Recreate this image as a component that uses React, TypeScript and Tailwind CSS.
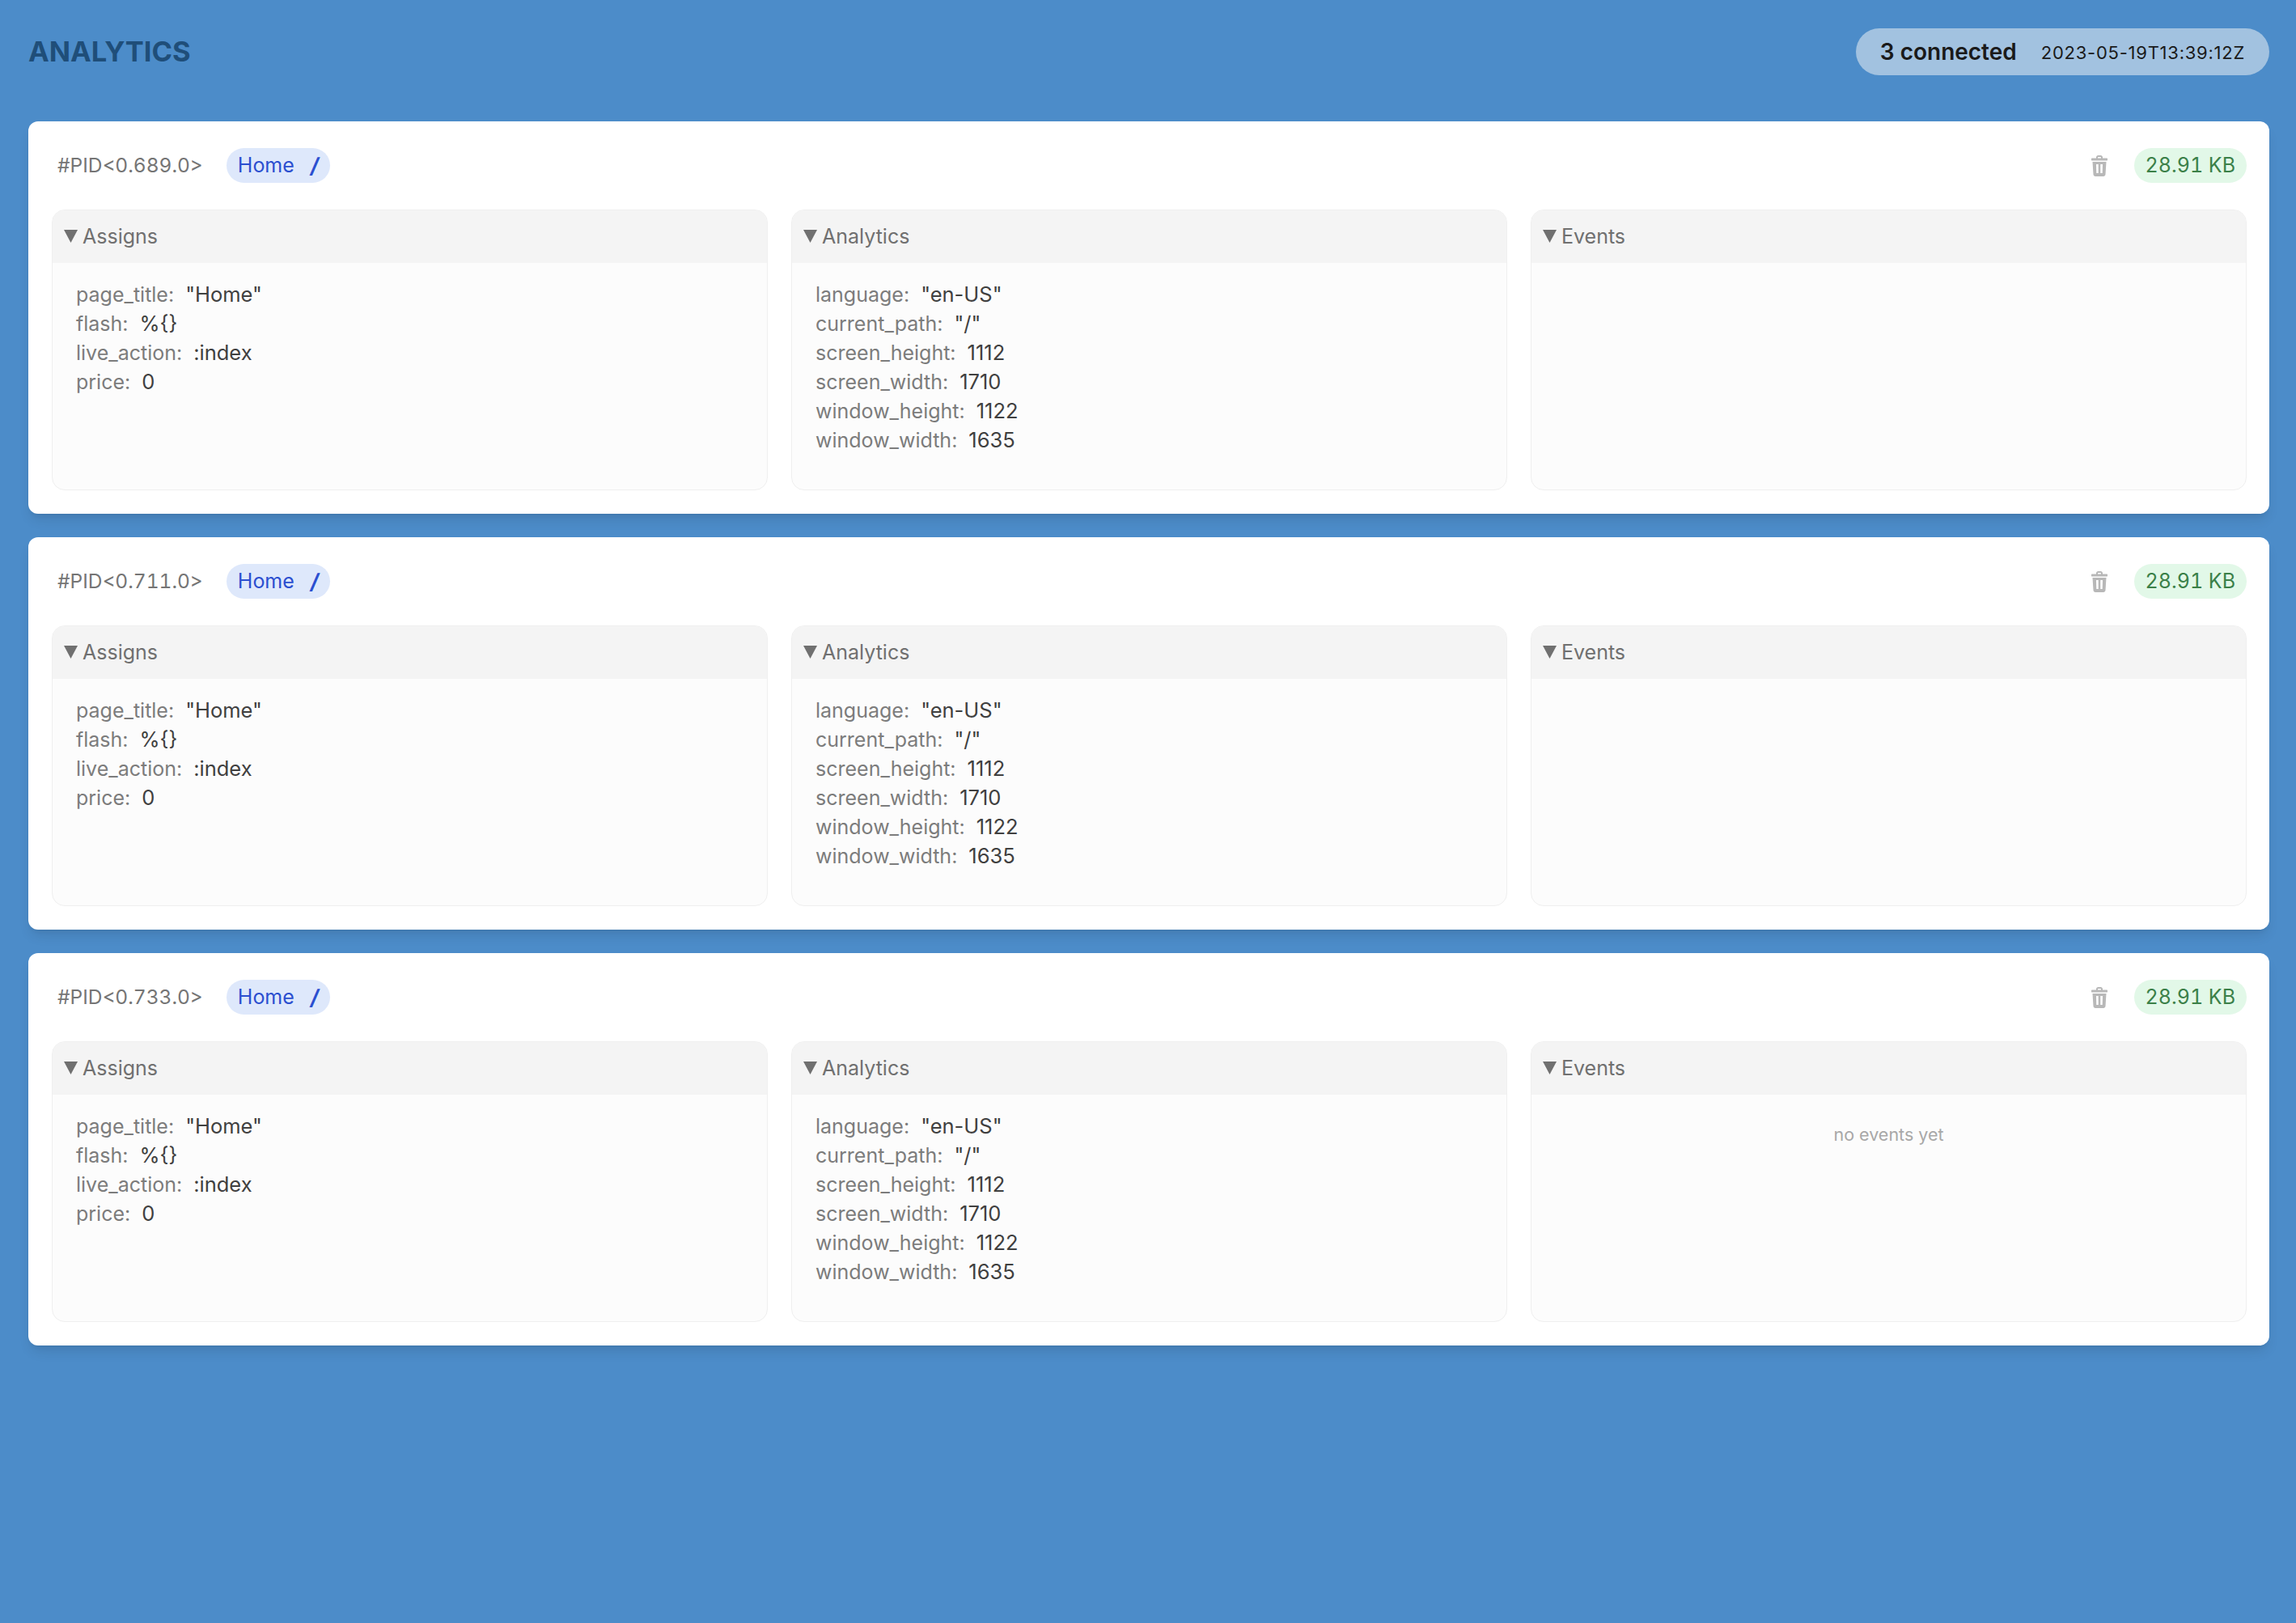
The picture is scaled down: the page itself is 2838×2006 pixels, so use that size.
const assigns = [
  ['page_title', '"Home"'],
  ['flash', '%{}'],
  ['live_action', ':index'],
  ['price', '0'],
]

const analytics = [
  ['language', '"en-US"'],
  ['current_path', '"/"'],
  ['screen_height', '1112'],
  ['screen_width', '1710'],
  ['window_height', '1122'],
  ['window_width', '1635'],
]

const sessions = [
  { pid: '#PID<0.689.0>', empty: false },
  { pid: '#PID<0.711.0>', empty: false },
  { pid: '#PID<0.733.0>', empty: true },
]

function TrashIcon() {
  return (
    <svg viewBox="0 0 20 26" className="w-[20px] h-[26px] text-[#b8b8b8]" fill="currentColor">
      <path d="M6 3.500V2.500C6 1.100 7.100 0 8.500 0h3C12.900 0 14 1.100 14 2.500v1h5c.6 0 1 .4 1 1v1.500c0 .3-.2.5-.5.5H.5C.2 6.500 0 6.300 0 6V4.500c0-.6.4-1 1-1h5zM8 3.500h4v-1c0-.3-.2-.5-.5-.5h-3c-.3 0-.5.2-.5.500v1z" />
      <path
        fillRule="evenodd"
        d="M1.500 8h17L17.500 23.500C17.400 25 16.300 26 15 26H5c-1.300 0-2.400-1-2.500-2.500L1.500 8zM6 11l.3 11h2.400V11H6zM11.300 11v11h2.400L14 11h-2.700z"
      />
    </svg>
  )
}

function Panel({ title, children }: { title: string; children?: React.ReactNode }) {
  return (
    <div className="rounded-[16px] border border-[#efefef] bg-[#fcfcfc] overflow-hidden">
      <div className="h-[65px] bg-[#f4f4f4] flex items-center pl-[14px] gap-[6px] text-[25px] text-[#707070]">
        <svg viewBox="0 0 17 16" className="w-[17px] h-[16px] mt-[-1px]" fill="currentColor">
          <polygon points="0,0 17,0 8.500,16" />
        </svg>
        {title}
      </div>
      {children}
    </div>
  )
}

function Rows({ rows }: { rows: string[][] }) {
  return (
    <div className="pt-[21px] pb-[43px] pl-[29px] text-[25px] leading-[36px]">
      {rows.map(([key, value]) => (
        <div key={key} className="flex gap-[14px]">
          <span className="text-[#7c7c7c]">{key}:</span>
          <span className="text-[#404040] text-[25.500px]">{value}</span>
        </div>
      ))}
    </div>
  )
}

function Session({ pid, empty }: { pid: string; empty: boolean }) {
  return (
    <div className="bg-white rounded-[12px] shadow-lg pl-[29px] pr-[28px] pt-[33px] pb-[29px]">
      <div className="flex items-center h-[43px] mb-[33px]">
        <span className="ml-[7px] text-[24.500px] text-[#757575] tabular-nums">{pid}</span>
        <span className="ml-[29px] h-[43px] px-[14px] rounded-full bg-[#dee8fb] text-[#2b4fd0] text-[25px] flex items-center gap-[20px]">
          Home
          <span className="italic font-bold text-[26px]">/</span>
        </span>
        <div className="ml-auto mr-[33px]">
          <TrashIcon />
        </div>
        <span className="h-[43px] px-[14px] rounded-full bg-[#e2f8e8] text-[#3b8048] text-[25px] flex items-center tabular-nums">
          28.91 KB
        </span>
      </div>
      <div className="grid grid-cols-3 gap-[29px]">
        <Panel title="Assigns">
          <Rows rows={assigns} />
        </Panel>
        <Panel title="Analytics">
          <Rows rows={analytics} />
        </Panel>
        <Panel title="Events">
          {empty && <p className="pt-[33px] text-center text-[21.500px] text-[#a8a8a8]">no events yet</p>}
        </Panel>
      </div>
    </div>
  )
}

export default function App() {
  return (
    <div className="min-h-screen bg-[#4c8cc9] pl-[35px] pr-[33px] pt-[35px] font-['Inter',sans-serif]">
      <header className="flex items-center justify-between mb-[57px]">
        <h1 className="text-[34.500px] font-bold text-[#1f4e79]">ANALYTICS</h1>
        <div className="h-[58px] rounded-full bg-[#a2c2e0] px-[30px] flex items-center gap-[30px] text-[#1a1a1a]">
          <span className="text-[28px] font-semibold">3 connected</span>
          <span className="text-[22px] tracking-[0.75px] mt-[3px]">2023-05-19T13:39:12Z</span>
        </div>
      </header>
      <main className="flex flex-col gap-[29px]">
        {sessions.map((s) => (
          <Session key={s.pid} pid={s.pid} empty={s.empty} />
        ))}
      </main>
    </div>
  )
}
